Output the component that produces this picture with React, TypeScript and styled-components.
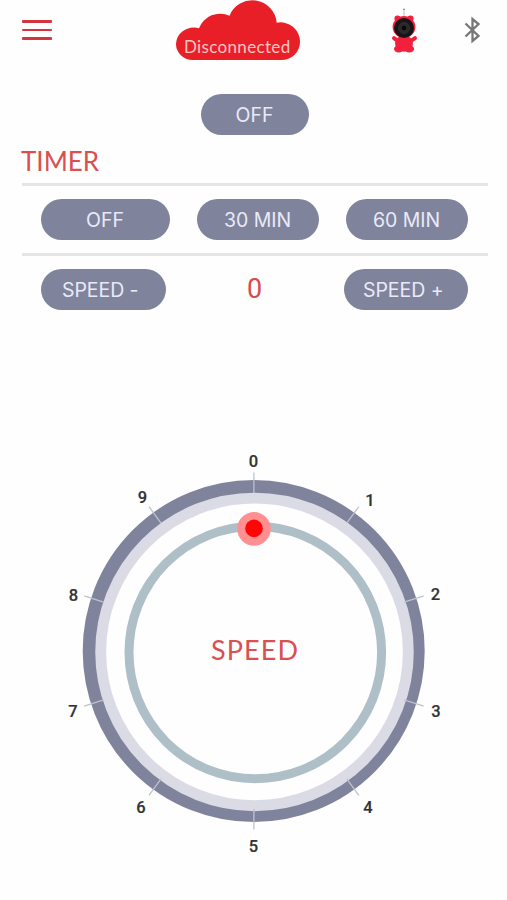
import React from "react";
import styled, { createGlobalStyle } from "styled-components";

const GlobalStyle = createGlobalStyle`
  * { box-sizing: border-box; }
  body { margin: 0; background: #fefefe; }
  button { border: 0; padding: 0; background: none; cursor: pointer; }
`;

const Screen = styled.main`
  width: 507px;
  height: 900px;
  overflow: hidden;
  display: flex;
  flex-direction: column;
  background: #fefefe;
  font-family: "Inter", sans-serif;
`;

const Header = styled.header`
  height: 60px;
  display: grid;
  grid-template-columns: 175px 126px 87px 33px 1fr;
  align-items: start;
`;

const MenuButton = styled.button`
  width: 30px;
  height: 22px;
  margin: 20px 0 0 22px;
  display: flex;
  flex-direction: column;
  gap: 6.2px;
`;

const MenuBar = styled.span`
  width: 30px;
  height: 2.5px;
  border-radius: 1px;
  background: #d3343d;
`;

const CloudStatus = styled.div`
  display: grid;
  width: 126px;
  height: 61px;

  > * { grid-area: 1 / 1; }
`;

const StatusText = styled.span`
  margin: 35.5px 0 0 9px;
  font: 400 17px/22px "Lato", sans-serif;
  letter-spacing: 0.34px;
  color: #ffc5c4;
  white-space: nowrap;
`;

const BearSlot = styled.div`
  padding-top: 8px;
`;

const BluetoothSlot = styled.div`
  padding: 16px 0 0 43px;
`;

const PowerRow = styled.div`
  display: flex;
  justify-content: center;
  margin-top: 34px;
  padding-left: 3px;
`;

const Pill = styled.button<{ $width: number; $shift?: number }>`
  width: ${(p) => p.$width}px;
  height: 41px;
  padding: 1px ${(p) => p.$shift ?? 1}px 0 0;
  border-radius: 21px;
  background: #80839c;
  color: #e9eaf8;
  font: 400 19.5px/40px "Inter", sans-serif;
  letter-spacing: -0.05px;
  white-space: nowrap;
`;

const Heading = styled.h1`
  margin: 9px 0 0 21px;
  height: 38.5px;
  font: 400 26px/34px "Lato", sans-serif;
  color: #d9504f;
`;

const Panel = styled.section`
  margin: 0 19px 0 22px;
  border-top: 3px solid #e5e5e7;
`;

const ControlRow = styled.div`
  height: 67.5px;
  padding: 0 20px 0 19px;
  display: flex;
  align-items: center;
  justify-content: space-between;
`;

const SpeedValue = styled.output`
  margin-bottom: 2px;
  font: 400 27px/34px "Roboto", sans-serif;
  color: #d94a4a;
`;

const DialArea = styled.section`
  margin-top: 106px;
  height: 440px;
`;

const Tick = styled.line`
  stroke: #bfc2cd;
  stroke-width: 1.3;
`;

const DialNumber = styled.text`
  font: 500 16.5px "Roboto", sans-serif;
  fill: #333336;
  stroke: #333336;
  stroke-width: 0.2;
  text-anchor: middle;
`;

const DialTitle = styled.text`
  font: 400 27px "Lato", sans-serif;
  letter-spacing: 1.1px;
  fill: #d9504f;
  text-anchor: middle;
`;

const labels = [
  { x: 253.5, y: 27 },
  { x: 370, y: 66 },
  { x: 435.5, y: 159.5 },
  { x: 436, y: 277 },
  { x: 368, y: 373 },
  { x: 253.5, y: 412 },
  { x: 141, y: 373 },
  { x: 73, y: 277 },
  { x: 73.5, y: 160.5 },
  { x: 142.5, y: 62.5 },
];

function CloudShape() {
  return (
    <svg width="126" height="61" viewBox="0 0 126 61" aria-hidden="true">
      <path
        d="M18 60A17 16 0 0 1 1 44.5A18 16.5 0 0 1 24 28.2A22.6 22.6 0 0 1 54.5 15.7A24.5 24.5 0 0 1 101.7 22.7A19.5 19.5 0 0 1 125 42A18.5 18 0 0 1 106 60Z"
        fill="#e91f28"
      />
    </svg>
  );
}

function BearCamera() {
  return (
    <svg width="31" height="46" viewBox="388 8 31 46" aria-hidden="true">
      <path d="M404 11V18" stroke="#bcbcbc" strokeWidth="1" />
      <circle cx="404" cy="9.5" r="1.1" fill="#999" />
      <g fill="#f3203d">
        <circle cx="397.5" cy="18.6" r="3.1" />
        <circle cx="410.5" cy="18.6" r="3.1" />
        <ellipse cx="404" cy="27" rx="11.4" ry="11" />
        <ellipse cx="404" cy="43.5" rx="9" ry="8.2" />
        <ellipse cx="398.8" cy="49" rx="4.8" ry="3.4" />
        <ellipse cx="409.3" cy="49" rx="4.8" ry="3.4" />
        <path
          d="M394 38.2L398 41.2M415 38.2L410.5 41.2"
          stroke="#f3203d"
          strokeWidth="4"
          strokeLinecap="round"
        />
      </g>
      <circle cx="404" cy="28" r="10" fill="#171517" />
      <circle cx="404" cy="28" r="5.4" fill="#292729" stroke="#353134" strokeWidth="1" />
      <circle cx="404" cy="28" r="2.2" fill="#080808" />
    </svg>
  );
}

function BluetoothIcon() {
  return (
    <svg width="18" height="28" viewBox="0 0 18 28" aria-hidden="true">
      <path
        d="M1.5 7.5L14.5 20L8.5 25V3L14.5 8L1.5 20.5"
        fill="none"
        stroke="#77777a"
        strokeWidth="2.3"
      />
    </svg>
  );
}

function Dial() {
  return (
    <svg width="507" height="440" viewBox="0 0 507 440">
      <circle cx="253.7" cy="221" r="164" fill="none" stroke="#80839c" strokeWidth="14" />
      <circle cx="254.5" cy="221.9" r="153.8" fill="none" stroke="#dadbe5" strokeWidth="10.9" />
      <circle cx="255.3" cy="222.5" r="126.3" fill="none" stroke="#aebfc8" strokeWidth="9" />
      {labels.map((label, i) => (
        <g key={i}>
          <Tick
            x1="253.9"
            y1="42.5"
            x2="253.9"
            y2="63"
            transform={`rotate(${i * 36} 253.9 221)`}
          />
          <DialNumber x={label.x} y={label.y + 10}>{i}</DialNumber>
        </g>
      ))}
      <circle cx="254" cy="98.9" r="16.8" fill="#ff8f91" />
      <circle cx="254" cy="98.4" r="8.8" fill="#fe0508" />
      <DialTitle x="255" y="229.7">SPEED</DialTitle>
    </svg>
  );
}

export default function App() {
  return (
    <Screen>
      <GlobalStyle />
      <Header>
        <MenuButton aria-label="Menu">
          <MenuBar />
          <MenuBar />
          <MenuBar />
        </MenuButton>
        <CloudStatus>
          <CloudShape />
          <StatusText>Disconnected</StatusText>
        </CloudStatus>
        <span />
        <BearSlot><BearCamera /></BearSlot>
        <BluetoothSlot><BluetoothIcon /></BluetoothSlot>
      </Header>
      <PowerRow><Pill $width={108}>OFF</Pill></PowerRow>
      <Heading>TIMER</Heading>
      <Panel>
        <ControlRow>
          <Pill $width={129}>OFF</Pill>
          <Pill $width={122}>30 MIN</Pill>
          <Pill $width={122}>60 MIN</Pill>
        </ControlRow>
      </Panel>
      <Panel>
        <ControlRow>
          <Pill $width={124.5} $shift={6}>SPEED -</Pill>
          <SpeedValue>0</SpeedValue>
          <Pill $width={124.5} $shift={5}>SPEED +</Pill>
        </ControlRow>
      </Panel>
      <DialArea><Dial /></DialArea>
    </Screen>
  );
}
